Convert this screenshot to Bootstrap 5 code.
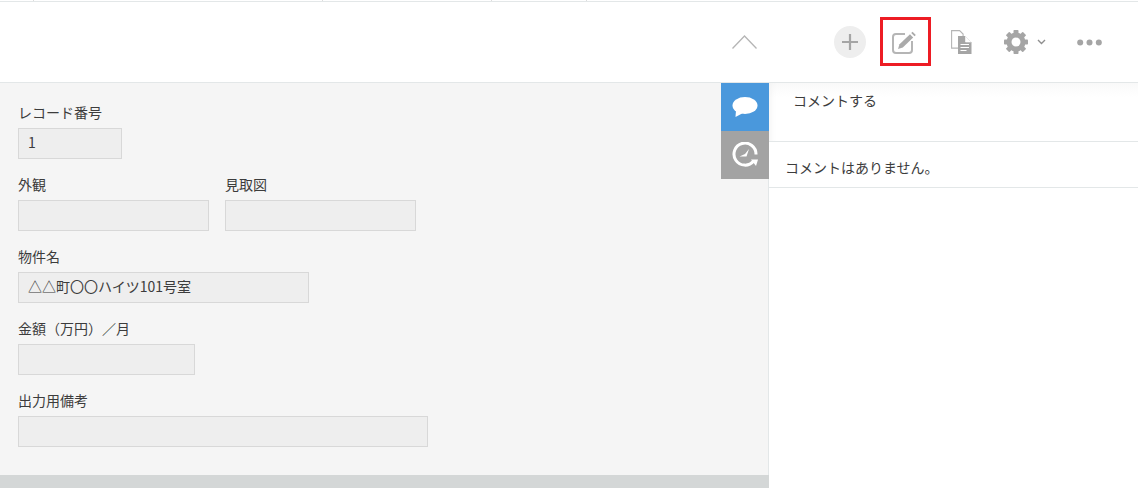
<!DOCTYPE html>
<html lang="ja">
<head>
<meta charset="utf-8">
<title>レコード</title>
<link href="https://cdn.jsdelivr.net/npm/bootstrap@5.3.0/dist/css/bootstrap.min.css" rel="stylesheet">
<style>
html,body{height:488px;overflow:hidden;background:#fff}
body{font-family:"Noto Sans CJK JP","Liberation Sans",sans-serif;font-size:14px;color:#3c3c3c;line-height:20px}
.tick-strip{height:1px;background:#fff}
.tick-strip i{display:block;width:1px;height:1px;background:#ddd;flex:none}
.top-rule{height:1px;background:#e3e7e8}
.tool-bar{height:81px;padding-left:732px;border-bottom:1px solid #e3e7e8}
.tool-bar svg{display:block;flex:none}
.add-circle{width:32px;height:32px;background:#eee;margin-left:77px}
.edit-frame{width:51px;height:49px;border:3px solid #ed1c24;margin:0 0 2px 14px;padding-left:9px}
.edit-frame svg{margin-top:2px}
.doc-btn{margin-left:20px}
.gear-btn{margin-left:32px}
.caret-btn{margin-left:9px}
.dots-btn{margin-left:31px}
.body-wrap{height:405px}
.left-col{width:769px;flex:none}
.form-pane{background:#f5f5f5;height:392px}
.form-area{padding:20px 0 0 18px}
.field-row{gap:16px;margin-bottom:16px}
.field-label{height:20px;margin-bottom:5px;line-height:18px}
.fbox{height:31px;padding:3px 9px;border:1px solid #d8d8d8;border-radius:0;background:#eee;color:#3c3c3c;font-size:14px;line-height:21px}
.w104{width:104px}.w191{width:191px}.w291{width:291px}.w177{width:177px}.w410{width:410px}
.tab-col{width:48px;flex:none;box-shadow:inset -1px 0 0 #e3e7e8}
.tab-btn{width:48px;height:48px}
.tab-blue{background:#4a98dc}
.tab-gray{background:#a3a3a3}
.foot-band{height:13px;background:#d4d7d7}
.right-col{flex:1 1 auto;min-width:0}
.comment-entry{height:59px;padding:7px 0 0 24px;border-bottom:1px solid #e3e7e8;background:linear-gradient(#f9f9f9,#fff 14px);box-shadow:inset 8px 0 8px -8px #eee}
.comment-empty{height:46px;padding:15px 0 0 16px;border-bottom:1px solid #e3e7e8}
</style>
</head>
<body>
<div class="tick-strip d-flex">
  <i style="margin-left:33px"></i><i style="margin-left:288px"></i><i style="margin-left:168px"></i><i style="margin-left:94px"></i>
</div>
<div class="top-rule"></div>
<header class="tool-bar d-flex align-items-center">
  <svg width="25" height="14" viewBox="0 0 25 14" aria-hidden="true"><path d="M.5 13.5 12.5 1l12 12.5" fill="none" stroke="#b5b5b5" stroke-width="1.3"/></svg>
  <div class="add-circle rounded-circle d-flex align-items-center justify-content-center">
    <svg width="18" height="18" viewBox="0 0 18 18" aria-hidden="true"><path d="M9 1v16M1 9h16" stroke="#a5a5a5" stroke-width="2.2"/></svg>
  </div>
  <div class="edit-frame d-flex align-items-center">
    <svg width="25" height="23" viewBox="0 0 25 23" aria-hidden="true">
      <path d="M13 3H4a3 3 0 0 0-3 3v13a3 3 0 0 0 3 3h13a3 3 0 0 0 3-3v-9" fill="none" stroke="#b5b5b5" stroke-width="2"/>
      <path d="M6 18l1.5-4.8L18 3.2l3.2 3.2L10.8 16.6z" fill="#aaa"/>
      <path d="M19.2 2 20.6.8l3.2 3.2-1.3 1.3z" fill="#aaa"/>
    </svg>
  </div>
  <svg class="doc-btn" width="21" height="24" viewBox="0 0 21 24" aria-hidden="true">
    <path d="M.6.6h8l3.5 3.5v14H.6z" fill="#fff" stroke="#b5b5b5" stroke-width="1.1"/>
    <path d="M7 6h7l6.5 6.5V24H7z" fill="#a5a5a5"/>
    <path d="M14.5 6.5v5.5H20" fill="#fff" stroke="#fff" stroke-width=".6"/>
    <path d="M9.5 14.5h8.5M9.5 17.5h8.5M9.5 20.5h6" stroke="#fff" stroke-width="1.2"/>
  </svg>
  <svg class="gear-btn" width="24" height="24" viewBox="0 0 24 24" aria-hidden="true">
    <g fill="#a5a5a5">
      <rect x="9.5" y="0" width="5" height="24" rx=".8"/>
      <rect x="9.5" y="0" width="5" height="24" rx=".8" transform="rotate(45 12 12)"/>
      <rect x="9.5" y="0" width="5" height="24" rx=".8" transform="rotate(90 12 12)"/>
      <rect x="9.5" y="0" width="5" height="24" rx=".8" transform="rotate(135 12 12)"/>
    </g>
    <circle cx="12" cy="12" r="7" fill="none" stroke="#a5a5a5" stroke-width="5"/>
    <circle cx="12" cy="12" r="4.5" fill="#fff"/>
  </svg>
  <svg class="caret-btn" width="9" height="6" viewBox="0 0 9 6" aria-hidden="true"><path d="M1 1l3.5 3.5L8 1" fill="none" stroke="#8f8f8f" stroke-width="1.4"/></svg>
  <svg class="dots-btn" width="25" height="7" viewBox="0 0 25 7" aria-hidden="true"><g fill="#a5a5a5"><circle cx="3.2" cy="3.5" r="3"/><circle cx="12.5" cy="3.5" r="3"/><circle cx="21.8" cy="3.5" r="3"/></g></svg>
</header>
<div class="body-wrap d-flex">
  <div class="left-col">
    <div class="form-pane d-flex">
      <main class="form-area flex-grow-1">
        <div class="field-row d-flex">
          <div><div class="field-label">レコード番号</div><div class="form-control fbox w104">1</div></div>
        </div>
        <div class="field-row d-flex">
          <div><div class="field-label">外観</div><div class="form-control fbox w191"></div></div>
          <div><div class="field-label">見取図</div><div class="form-control fbox w191"></div></div>
        </div>
        <div class="field-row d-flex">
          <div><div class="field-label">物件名</div><div class="form-control fbox w291">△△町〇〇ハイツ101号室</div></div>
        </div>
        <div class="field-row d-flex">
          <div><div class="field-label">金額（万円）／月</div><div class="form-control fbox w177"></div></div>
        </div>
        <div class="field-row d-flex">
          <div><div class="field-label">出力用備考</div><div class="form-control fbox w410"></div></div>
        </div>
      </main>
      <div class="tab-col">
        <div class="tab-btn tab-blue d-flex align-items-center justify-content-center">
          <svg width="26" height="22" viewBox="0 0 26 22" aria-hidden="true"><ellipse cx="13" cy="9.5" rx="12.5" ry="8.5" fill="#fff"/><path d="M4 14 3.5 21 11 17z" fill="#fff"/></svg>
        </div>
        <div class="tab-btn tab-gray d-flex align-items-center justify-content-center">
          <svg width="26" height="26" viewBox="0 0 26 26" aria-hidden="true">
            <path d="M21.6 19A11 11 0 1 1 24 12.5" fill="none" stroke="#fff" stroke-width="3"/>
            <path d="M19 17.5h7l-2 6.5z" fill="#fff"/>
            <path d="M7.5 14.5 13 12l4-5-2.5 7.5z" fill="#fff"/>
          </svg>
        </div>
      </div>
    </div>
    <div class="foot-band"></div>
  </div>
  <aside class="right-col">
    <div class="comment-entry">コメントする</div>
    <div class="comment-empty">コメントはありません。</div>
  </aside>
</div>
<script src="https://cdn.jsdelivr.net/npm/bootstrap@5.3.0/dist/js/bootstrap.bundle.min.js"></script>
</body>
</html>
